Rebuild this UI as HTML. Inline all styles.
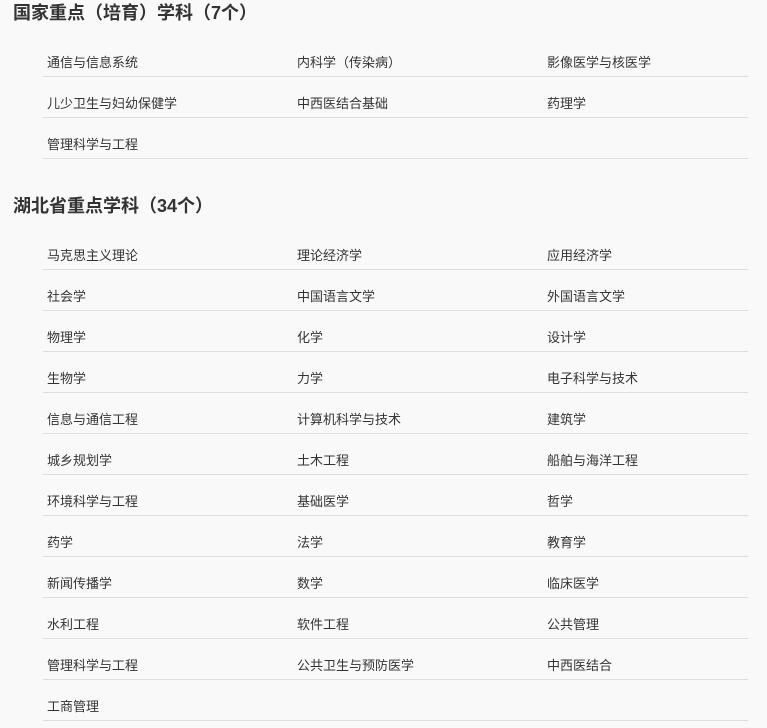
<!DOCTYPE html>
<html><head><meta charset="utf-8"><style>
body{margin:0;background:#f9f9f9;width:767px;height:728px;overflow:hidden;font-family:"Liberation Sans","Noto Sans CJK SC",sans-serif;color:#333;position:relative}
h2{position:absolute;left:13px;margin:0;font-size:18px;font-weight:bold;line-height:24px;color:#333}
ul{position:absolute;left:43px;width:705px;margin:0;padding:0;list-style:none}
li{float:left;box-sizing:border-box;height:41px;padding:19px 0 0 4px;line-height:16px;font-size:13px;border-bottom:1px solid #ddd;margin:0;white-space:nowrap}
li:nth-child(3n+1){width:250px}
li:nth-child(3n+2){width:250px}
li:nth-child(3n){width:205px}
li.full{width:705px !important}
</style></head><body>
<h2 style="top:1px">国家重点（培育）学科（7个）</h2>
<ul style="top:36px">
<li>通信与信息系统</li><li>内科学（传染病）</li><li>影像医学与核医学</li>
<li>儿少卫生与妇幼保健学</li><li>中西医结合基础</li><li>药理学</li>
<li class="full">管理科学与工程</li>
</ul>
<h2 style="top:194px">湖北省重点学科（34个）</h2>
<ul style="top:229px">
<li>马克思主义理论</li><li>理论经济学</li><li>应用经济学</li>
<li>社会学</li><li>中国语言文学</li><li>外国语言文学</li>
<li>物理学</li><li>化学</li><li>设计学</li>
<li>生物学</li><li>力学</li><li>电子科学与技术</li>
<li>信息与通信工程</li><li>计算机科学与技术</li><li>建筑学</li>
<li>城乡规划学</li><li>土木工程</li><li>船舶与海洋工程</li>
<li>环境科学与工程</li><li>基础医学</li><li>哲学</li>
<li>药学</li><li>法学</li><li>教育学</li>
<li>新闻传播学</li><li>数学</li><li>临床医学</li>
<li>水利工程</li><li>软件工程</li><li>公共管理</li>
<li>管理科学与工程</li><li>公共卫生与预防医学</li><li>中西医结合</li>
<li class="full">工商管理</li>
</ul>
</body></html>
